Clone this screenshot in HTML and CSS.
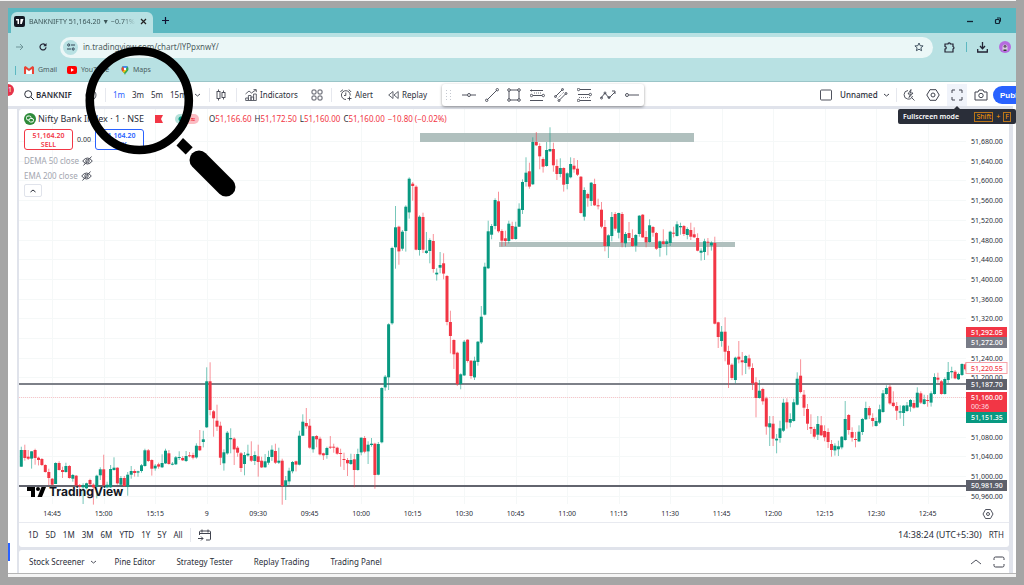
FILE: index.html
```html
<!DOCTYPE html>
<html lang="en">
<head>
<meta charset="utf-8">
<title>BANKNIFTY chart</title>
<link rel="stylesheet" href="styles.css">
</head>
<body>
<div class="topline"></div>
<div class="window">
  <header class="tabstrip">
    <div class="tab">
      <svg class="favicon" viewBox="0 0 11 11"><rect width="11" height="11" rx="2" fill="#131722"/><path d="M2 3h3v5H3.500V4.500H2zM6.500 3h3L7.800 8H6.200z" fill="#fff"/></svg>
      <span class="tab-title">BANKNIFTY 51,164.20 ▼ −0.71%</span>
      <button class="plain" aria-label="Close tab"><svg width="7" height="7" viewBox="0 0 7 7"><path d="M1 1l5 5M6 1L1 6" stroke="#222" stroke-width="1.200"/></svg></button>
    </div>
    <button class="plain newtab" aria-label="New tab"><svg width="7" height="7" viewBox="0 0 7 7"><path d="M3.500 0v7M0 3.500h7" stroke="#113" stroke-width="1.200"/></svg></button>
    <div class="winbuttons">
      <button class="plain" aria-label="Minimize"><svg width="8" height="8" viewBox="0 0 8 8"><path d="M1 4.500h6" stroke="#123" stroke-width="1.300"/></svg></button>
      <button class="plain" aria-label="Restore"><svg width="8" height="8" viewBox="0 0 8 8"><rect x="1.500" y="2.500" width="4" height="4" rx="1" fill="none" stroke="#123" stroke-width="1.200"/><path d="M3 1h3.500v3.700" fill="none" stroke="#123"/></svg></button>
    </div>
  </header>

  <div class="addressbar">
    <button class="plain" aria-label="Forward"><svg width="8" height="8" viewBox="0 0 8 8"><path d="M0 4h7M4 1l3 3-3 3" fill="none" stroke="#6f9599"/></svg></button>
    <button class="plain" aria-label="Reload"><svg width="8" height="8" viewBox="0 0 8 8"><path d="M7 4.200A3 3 0 1 1 6 1.700" fill="none" stroke="#223" stroke-width="1.200"/><path d="M7.500 0v3.200H4.300z" fill="#223"/></svg></button>
    <div class="omnibox">
      <span class="site"><svg width="8" height="8" viewBox="0 0 8 8"><g fill="none" stroke="#345"><circle cx="1.700" cy="2" r="1.100"/><path d="M4 2h4M0 6h4"/><circle cx="6.200" cy="6" r="1.100"/></g></svg></span>
      <input class="url" aria-label="Address" value="in.tradingview.com/chart/lYPpxnwY/">
      <svg width="10" height="10" viewBox="0 0 10 10"><path d="M5 1l1.200 2.700 2.900.2-2.200 1.900.7 2.900L5 7.200 2.400 8.700l.7-2.900L.9 3.900l2.900-.2z" fill="none" stroke="#345" stroke-width=".9"/></svg>
    </div>
    <div class="extensions">
      <svg width="11" height="11" viewBox="0 0 11 11"><path d="M1 2h3a1.200 1.200 0 0 1 2.400 0H9v2.500a1.300 1.300 0 0 1 0 2.500v3H1V7a1.200 1.200 0 0 0 0-2.500z" fill="none" stroke="#223" stroke-width="1.200"/></svg>
      <i></i>
      <svg width="11" height="11" viewBox="0 0 11 11"><path d="M5.500 0v6M3 4l2.500 2.700L8 4M.7 7v3h9.600V7" fill="none" stroke="#223" stroke-width="1.300"/></svg>
      <svg width="12" height="12" viewBox="0 0 12 12"><circle cx="6" cy="6" r="6" fill="#b66be0"/><path d="M3.500 9.500V6a2.500 2.500 0 0 1 5 0v3.500z" fill="#d9cfe0"/><circle cx="6" cy="5.200" r="1.500" fill="#6a5a70"/><path d="M4.500 10V8.500h3V10z" fill="#333"/></svg>
    </div>
  </div>

  <nav class="bookmarks">
    <a class="gmail" href="#"><svg width="10" height="8" viewBox="0 0 10 8"><path d="M0 1v7h2V3l3 2 3-2v5h2V1L8.500 0 5 2.700 1.500 0z" fill="#ea4335"/><path d="M2.200 3.500V8h5.600V3.500L5 5.600z" fill="#fff"/></svg>Gmail</a>
    <a class="youtube" href="#"><svg width="10" height="8" viewBox="0 0 10 8"><rect width="10" height="8" rx="2" fill="#f00"/><path d="M4 2.300v3.400L7 4z" fill="#fff"/></svg>YouTube</a>
    <a href="#"><svg width="8" height="9" viewBox="0 0 8 9"><path d="M4 9C3.500 6.500.5 5.500.5 3a3.500 3.500 0 0 1 7 0C7.500 5.500 4.500 6.500 4 9z" fill="#34a853"/><path d="M1.500.8A3.500 3.500 0 0 1 6.600.9L4 3z" fill="#4285f4"/><path d="M1.500.8L4 3 1.700 5.800C.9 5 .5 4 .5 3c0-.9.4-1.700 1-2.200z" fill="#ea4335"/><path d="M1.700 5.700L4 3l1.500 1-2.600 3z" fill="#fbbc04"/><circle cx="4" cy="3" r="1.200" fill="#fff"/></svg>Maps</a>
  </nav>

  <div class="toolbar">
    <span class="badge">1</span>
    <svg width="10" height="10" viewBox="0 0 10 10"><circle cx="4.200" cy="4.200" r="3.500" fill="none" stroke="#2a2e39"/><path d="M7 7l3 3" stroke="#2a2e39"/></svg>
    <button class="plain symbol">BANKNIF</button>
    <svg width="12" height="12" viewBox="0 0 12 12"><circle cx="6" cy="6" r="5" fill="none" stroke="#2a2e39" stroke-width=".8"/><path d="M6 3.500v5M3.500 6h5" stroke="#2a2e39" stroke-width=".8"/></svg>
    <i class="sep"></i>
    <button class="plain on">1m</button>
    <button class="plain">3m</button>
    <button class="plain">5m</button>
    <button class="plain">15m</button>
    <svg width="8" height="8" viewBox="0 0 8 8"><path d="M2 3l2.500 2L7 3" fill="none" stroke="#50535e"/></svg>
    <i class="sep"></i>
    <svg width="10" height="12" viewBox="0 0 10 12"><g fill="none" stroke="#40434e" stroke-width=".9"><rect x="1" y="2.500" width="3" height="7"/><path d="M2.500 .5v2M2.500 9.500v2"/><rect x="6" y="3.500" width="3" height="5"/><path d="M7.500 1.500v2M7.500 8.500v2"/></g></svg>
    <i class="sep"></i>
    <button class="plain"><svg width="12" height="12" viewBox="0 0 12 12"><g fill="none" stroke="#50535e" stroke-width=".9"><path d="M.5 5L4 2l2.500 2L11 .8M8.500.6h2.800v2.500"/><path d="M.7 11.500V9h2.700v2.500zM3.400 11.500V6.500h2.600v5zM6 11.500V8h2.600v3.500zM8.600 11.500V5h2.700v6.500z"/></g></svg>Indicators</button>
    <svg width="12" height="12" viewBox="0 0 12 12"><g fill="none" stroke="#50535e"><rect x="1" y="1" width="4" height="4" rx="1"/><rect x="7" y="1" width="4" height="4" rx="1"/><rect x="1" y="7" width="4" height="4" rx="1"/><rect x="7" y="7" width="4" height="4" rx="1"/></g></svg>
    <i class="sep"></i>
    <button class="plain"><svg width="12" height="12" viewBox="0 0 12 12"><g fill="none" stroke="#40434e" stroke-width=".9"><path d="M6 10.500A4.400 4.400 0 1 1 10.200 6.500M5.800 3.500V6.500H4M.5 3A4 4 0 0 1 3 .8M8.600.8A4 4 0 0 1 11 3M9.500 7.500v4M7.500 9.500h4"/></g></svg>Alert</button>
    <button class="plain"><svg width="11" height="10" viewBox="0 0 11 10"><path d="M5 1.500v7L.7 5zM10.200 1.500v7L6 5z" fill="none" stroke="#50535e" stroke-width=".9"/></svg>Replay</button>
    <div class="drawbar">
      <svg width="8" height="14" viewBox="0 0 8 14"><path d="M1.500 2v11M5.500 2v11" stroke="#c5c8d0" stroke-dasharray="1 2"/></svg>
      <svg width="14" height="14" viewBox="0 0 14 14"><path d="M0 7h5M9 7h5"/><circle cx="7" cy="7" r="1.500"/></svg>
      <svg width="14" height="14" viewBox="0 0 14 14"><path d="M2 12L12 2"/><circle cx="1.700" cy="12.300" r="1.200"/><circle cx="12.300" cy="1.700" r="1.200"/></svg>
      <svg width="14" height="14" viewBox="0 0 14 14"><path d="M2 3v8M12 3v8M3 2h8M3 12h8"/><circle cx="2" cy="2" r="1.300"/><circle cx="12" cy="2" r="1.300"/><circle cx="2" cy="12" r="1.300"/><circle cx="12" cy="12" r="1.300"/></svg>
      <svg width="15" height="14" viewBox="0 0 15 14"><path d="M0 2.500h13M3 7.500h9M0 12.500h13"/><path d="M4 5h8" stroke-dasharray="1 1" stroke-width=".8"/><circle cx="1.500" cy="7.500" r="1.200"/><circle cx="13.300" cy="7.500" r="1.200"/><circle cx="1.500" cy="2.500" r=".6"/></svg>
      <svg width="14" height="14" viewBox="0 0 14 14"><path d="M1.500 8.500l7-7M5 12.500l7-7"/><path d="M3.500 10.500l7-7" stroke-dasharray="1 1" stroke-width=".8"/><circle cx="1.500" cy="8.500" r="1"/><circle cx="8.500" cy="1.500" r="1"/><circle cx="5" cy="12.500" r="1"/><circle cx="12" cy="5.500" r="1"/></svg>
      <svg width="15" height="14" viewBox="0 0 15 14"><path d="M3 1.500h11M1 6.500h11M3 12.500h11"/><path d="M2 9.500h11" stroke-dasharray="1 1" stroke-width=".8"/><circle cx="1.500" cy="1.500" r="1.200"/><circle cx="13.300" cy="6.500" r="1.200"/><circle cx="1.500" cy="12.500" r="1.200"/></svg>
      <svg width="16" height="14" viewBox="0 0 16 14"><path d="M1 10l4-5 4 5 6-6M12 3h3v3"/><circle cx="1.500" cy="10" r="1"/><circle cx="5" cy="5" r="1"/><circle cx="9" cy="9.500" r="1"/></svg>
      <svg width="14" height="14" viewBox="0 0 14 14"><circle cx="2" cy="7" r="1.500"/><path d="M4 7h10"/></svg>
    </div>
    <span></span>
    <div class="layouts">
      <svg width="12" height="12" viewBox="0 0 12 12"><rect x=".5" y="1" width="11" height="10" rx="1" fill="none" stroke="#50535e"/></svg>
      <button class="plain name">Unnamed<svg width="8" height="8" viewBox="0 0 8 8"><path d="M2 3l2.500 2L7 3" fill="none" stroke="#40434e"/></svg></button>
      <i class="sep"></i>
      <button class="plain tool" aria-label="Quick search"><svg width="12" height="12" viewBox="0 0 12 12"><g fill="none" stroke="#40434e" stroke-width=".9"><path d="M5 1.500A4.300 4.300 0 1 0 9.500 7M8.500 8.500l3 3"/><path d="M8 .5L5 5h2.500L6 8.500 10 4H7.500z"/></g></svg></button>
      <button class="plain tool" aria-label="Settings"><svg width="14" height="12" viewBox="0 0 14 12"><g fill="none" stroke="#40434e"><path d="M4 .7h6L13.200 6 10 11.300H4L.8 6z"/><circle cx="7" cy="6" r="2"/></g></svg></button>
      <button class="plain tool active" aria-label="Fullscreen"><svg width="12" height="12" viewBox="0 0 12 12"><path d="M1 4V1h3M8 1h3v3M11 8v3H8M4 11H1V8" fill="none" stroke="#40434e"/></svg></button>
      <button class="plain tool" aria-label="Snapshot"><svg width="14" height="12" viewBox="0 0 14 12"><g fill="none" stroke="#40434e"><path d="M1 3h3l1-2h4l1 2h3v8H1z"/><circle cx="7" cy="6.500" r="2.200"/></g></svg></button>
      <button class="publish">Publish</button>
    </div>
  </div>

  <div class="workspace">
    <aside class="rail"><span></span></aside>
    <main class="main">
      <section class="pane">
        <svg class="chart" id="chart" viewBox="19 109 990 413"></svg>
        <div class="legend">
          <div class="title">
            <svg width="12" height="12" viewBox="0 0 12 12"><circle cx="6" cy="6" r="6" fill="#2e8b3a"/><rect x="2.500" y="3" width="4.500" height="4" rx="1.500" fill="none" stroke="#fff"/><rect x="5" y="5.500" width="4.500" height="3.500" rx="1.500" fill="#2e8b3a" stroke="#fff"/></svg>
            <h1>Nifty Bank Index · 1 · NSE</h1>
            <svg class="flag" width="8" height="8" viewBox="0 0 8 8"><path d="M0 0h8L6 4l2 4H0z" fill="#f23645"/></svg>
            <span class="pills"><b></b><b class="pink">≈</b></span>
            <span class="ohlc">O<em>51,166.60</em></span><span class="ohlc">H<em>51,172.50</em></span><span class="ohlc">L<em>51,160.00</em></span><span class="ohlc">C<em>51,160.00</em></span><span class="ohlc"><em>−10.80 (−0.02%)</em></span>
          </div>
          <div class="orders">
            <button class="order sell">51,164.20<br>SELL</button>
            <span>0.00</span>
            <button class="order buy">51,164.20<br>BUY</button>
          </div>
          <div class="study">DEMA 50 close <svg width="11" height="10" viewBox="0 0 11 10"><g fill="none" stroke="#50535e"><path d="M.7 5Q5.500-1 10.300 5 5.500 11 .7 5z"/><circle cx="5.500" cy="5" r="1.700"/><path d="M1.500 9.500l8-9"/></g></svg></div>
          <div class="study">EMA 200 close <svg width="11" height="10" viewBox="0 0 11 10"><g fill="none" stroke="#50535e"><path d="M.7 5Q5.500-1 10.300 5 5.500 11 .7 5z"/><circle cx="5.500" cy="5" r="1.700"/><path d="M1.500 9.500l8-9"/></g></svg></div>
          <button class="collapse" aria-label="Collapse legend"><svg width="8" height="6" viewBox="0 0 8 6"><path d="M1.500 4L4 2l2.500 2" fill="none" stroke="#2a2e39"/></svg></button>
        </div>
        <div class="brand"><svg width="19" height="10" viewBox="0 0 19 10"><path d="M0 0h8v10H4V4H0z"/><circle cx="11" cy="2" r="2"/><path d="M14.500 0H19l-4 10h-4.500z"/></svg>TradingView</div>
      </section>
      <div class="ranges">
        <button class="plain">1D</button><button class="plain">5D</button><button class="plain">1M</button><button class="plain">3M</button><button class="plain">6M</button><button class="plain">YTD</button><button class="plain">1Y</button><button class="plain">5Y</button><button class="plain">All</button>
        <i class="sep"></i>
        <svg width="14" height="13" viewBox="0 0 14 13"><path d="M1.500 6V3q0-1 1-1h9q1 0 1 1v7q0 1-1 1H8M1.500 4.500h11M4 .5v3M10 .5v3M0 9.500h5M3 7.500l2 2-2 2" fill="none" stroke="#40434e"/></svg>
        <span class="clock">14:38:24 (UTC+5:30)</span><span class="rth">RTH</span>
      </div>
      <div class="panels">
        <button class="plain">Stock Screener <svg width="8" height="8" viewBox="0 0 8 8"><path d="M2 3l2.500 2L7 3" fill="none" stroke="#50535e"/></svg></button>
        <button class="plain">Pine Editor</button>
        <button class="plain">Strategy Tester</button>
        <button class="plain">Replay Trading</button>
        <button class="plain">Trading Panel</button>
        <span class="resize"><svg width="12" height="12" viewBox="0 0 12 12"><path d="M1 8l5-4 5 4" fill="none" stroke="#50535e"/></svg><svg width="12" height="12" viewBox="0 0 12 12"><path d="M1 4V2.500Q1 1 2.500 1h7Q11 1 11 2.500V4M11 8v1.500Q11 11 9.500 11h-7Q1 11 1 9.500V8" fill="none" stroke="#40434e"/></svg></span>
      </div>
    </main>
  </div>
  <footer class="windowfoot"></footer>
  <div class="tooltip"><span>Fullscreen mode</span><kbd>Shift</kbd>+<kbd>F</kbd></div>
</div>
<svg class="magnifier" width="152" height="152" viewBox="85 46 152 152"><circle cx="139.300" cy="100.500" r="49.500" fill="none" stroke="#000" stroke-width="8.600"/><path d="M176.500 145.500L183 138l9.700 9.300-7 7.200z"/><path d="M199 160l27 27" stroke="#000" stroke-width="19" stroke-linecap="round"/></svg>
<script src="chart.js"></script>
</body>
</html>
```
FILE: styles.css
```css
* { box-sizing: border-box; }
body { margin: 0; min-height: 100vh; padding: 0 8px 8px; background: #a5a5a5; font: 8px/12px "Noto Sans", "Open Sans", sans-serif; color: #2a2e39; display: flex; flex-direction: column; }
svg { flex: none; display: block; }
.topline { height: 1px; margin: 0 0 7px -8px; background: #f4f4f4; }
.window { position: relative; flex: 1; display: flex; flex-direction: column; background: #fff; overflow: hidden; }
.plain { border: 0; padding: 0; margin: 0; background: none; font: inherit; color: inherit; display: flex; align-items: center; white-space: nowrap; text-align: left; }
.sep { width: 1px; height: 14px; background: #e6e8ee; }

.tabstrip { height: 25px; padding-left: 3px; display: flex; align-items: center; background: #5cb8c1; }
.tab { align-self: flex-end; width: 142px; height: 21px; padding: 0 6px 2px 3px; display: flex; align-items: center; gap: 4px; background: #b8e1e3; border-radius: 6px 6px 0 0; }
.favicon { width: 11px; height: 11px; }
.tab-title { flex: 1; overflow: hidden; white-space: nowrap; font-size: 7px; color: #3c5558; mask-image: linear-gradient(to right, #000 88%, transparent); }
.newtab { margin-left: 9px; }
.winbuttons { margin-left: auto; padding-right: 14px; display: flex; gap: 20px; }
.addressbar { height: 28px; padding: 0 5px 0 8px; display: flex; align-items: center; gap: 15px; background: #b8e1e3; }
.omnibox { flex: 1; height: 21px; margin-left: -2px; padding: 0 9px 0 3px; display: flex; align-items: center; gap: 5px; border-radius: 11px; background: #ebf7f7; }
.site { width: 15px; height: 15px; display: grid; place-items: center; border-radius: 50%; background: #b8e1e3; }
.url { flex: 1; border: 0; padding: 0; background: none; font: inherit; color: #4b5d60; }
.extensions { width: 67px; margin-left: -4px; display: flex; align-items: center; justify-content: space-between; }
.extensions i { width: 1px; height: 10px; background: #5cb8c1; }
.bookmarks { height: 21px; padding: 0 0 2px 7px; display: flex; align-items: center; background: #b8e1e3; border-bottom: 1px solid #9bc5c8; font-size: 7px; }
.bookmarks::before { content: ""; width: 1px; height: 9px; margin-right: 8px; background: #5cb8c1; }
.bookmarks a { display: flex; align-items: center; gap: 4px; color: #4b5d60; text-decoration: none; }
.bookmarks .gmail { width: 43px; }
.bookmarks .youtube { width: 54px; }

.toolbar { height: 24px; padding-top: 2px; display: grid; align-items: center; grid-template-columns: 16px 12px 49px 20px 8px 19px 19px 19px 23px 16px 7px 20px 9px 66px 20px 9px 48px 54px 202px 1fr 196px; }
.toolbar .plain { gap: 3px; }
.badge { width: 6px; height: 12px; align-self: start; border-radius: 0 6px 6px 0; background: #e5344a; color: #fff; font-size: 7px; line-height: 12px; }
.symbol, .publish { font-weight: 600; }
.toolbar .on { color: #2962ff; }
.drawbar { height: 22px; display: flex; align-items: center; justify-content: space-between; padding: 0 5px 0 3px; border-radius: 3px; background: #fff; box-shadow: 0 1px 3px #0006; z-index: 1; }
.drawbar svg { fill: none; stroke: #50535e; }
.layouts { display: flex; align-items: center; overflow: hidden; }
.layouts > * { flex: none; }
.layouts .name { width: 56px; padding-right: 6px; margin: 0 0 0 8px; justify-content: space-between; font-weight: 500; }
.layouts .sep { margin: 0 1px 0 0; }
.layouts .tool { width: 20px; height: 22px; margin: 0 2px 0 1px; justify-content: center; }
.layouts .tool + .tool { margin-left: 2px; }
.layouts .active { background: #f0f3fa; }
.publish { height: 18px; padding: 0 7px; border: 0; border-radius: 9px; background: #2962ff; color: #fff; font-size: 8px; }

.workspace { flex: 1; display: flex; background: #e0e3eb; padding-right: 4px; border-right: 3px solid #fff; }
.rail { width: 9px; margin-top: 3px; background: #fff; display: flex; align-items: flex-end; }
.rail span { width: 2px; height: 18px; margin-bottom: 12px; background: #2962ff; }
.main { flex: 1; min-width: 0; padding: 3px 0 0 2px; display: flex; flex-direction: column; }
.pane { position: relative; background: #fff; border-radius: 3px 3px 0 0; overflow: hidden; }
.chart { width: 100%; height: auto; font-size: 7px; fill: #2a2e39; }
.legend { position: absolute; left: 5px; top: 4px; }
.title, .orders, .study { display: flex; align-items: center; }
.title h1 { margin: 0 7px 0 2px; width: 110px; font: 9px/12px "Noto Sans", sans-serif; white-space: nowrap; }
.flag { margin-right: 12px; }
.pills { display: flex; width: 34px; }
.pills b { width: 12px; height: 10px; border-radius: 5px 0 0 5px; background: radial-gradient(circle, #089981 2px, #b5e1da 3px); line-height: 9px; text-align: center; }
.pills .pink { border-radius: 0 5px 5px 0; background: #fbbcc2; color: #f23645; }
.ohlc { margin-right: 3px; white-space: nowrap; }
.ohlc em { font-style: normal; color: #f23645; }
.orders { margin-top: 4px; }
.orders span { width: 22px; text-align: center; font-size: 7px; }
.order { width: 49px; height: 21px; padding: 0; background: #fff; border: 1px solid; border-radius: 3px; font: 600 7px/9px "Noto Sans", sans-serif; }
.sell { color: #f23645; }
.buy { color: #2962ff; }
.study { height: 15px; gap: 3px; color: #a3a6af; }
.orders + .study { margin-top: 3px; }
.collapse { width: 18px; height: 13px; margin-top: 1px; padding: 0; display: grid; place-items: center; border: 1px solid #e0e3eb; border-radius: 2px; background: #fff; }
.brand { position: absolute; left: 8px; bottom: 22px; display: flex; align-items: center; gap: 3px; font: 700 12px/16px Inter, sans-serif; color: #131722; }
.ranges { height: 25px; padding: 0 5px 0 9px; display: flex; align-items: center; gap: 7px; background: #fff; border-top: 1px solid #e8eaf0; border-radius: 0 0 3px 3px; }
.clock { margin-left: auto; font-size: 9px; }
.panels { flex: 1; margin-top: 3px; padding: 0 4px 0 10px; display: flex; align-items: center; gap: 21px; background: #fff; border-radius: 3px 3px 0 0; }
.panels .plain { gap: 5px; }
.panels .plain:first-child { margin-right: -4px; }
.resize { margin-left: auto; display: flex; gap: 11px; }
.windowfoot { height: 4px; border-top: 1px solid #b4b4b4; background: #f5f5f5; }
.tooltip { position: absolute; right: 0; top: 101px; width: 118px; height: 15px; padding: 0 5px; display: flex; align-items: center; gap: 3px; border-radius: 2px; background: #2a2e39; color: #ff9800; font-size: 7px; line-height: 10px; }
.tooltip::before { content: ""; position: absolute; left: 56px; top: -3px; border: 3px solid transparent; border-top: 0; border-bottom-color: #2a2e39; }
.tooltip span { flex: 1; color: #fff; font-weight: 600; white-space: nowrap; }
.tooltip kbd { padding: 0 1px; border: 1px solid #b9751a; font: inherit; line-height: 8px; }
.magnifier { position: absolute; left: 85px; top: 46px; pointer-events: none; }
```
FILE: chart.js
```js
// Candles: colour, high, body top, body bottom, low, in thirds of a pixel below the section's base.
const sections = [
  [-54, 350, `g290 300 350 350,r284 300 324 332,r300 320 326 330,g304 304 326 356,r296 300 324 344,r320 323 330 346,r324 327 345 348,r343 345 366 368,r356 366 384 406,r384 386 404 406,g337 339 402 402,r334 339 360 362,r350 360 366 384,g338 348 366 368,r345 348 384 386,g372 375 386 395,r375 377 406 408,r402 405 410 440,g400 406 412 462,g398 400 415 418,r386 390 403 405,r400 404 412 464,g374 377 410 445,g352 358 376 390,r314 358 406 408,g395 404 412 415,g345 357 412 414,g322 353 360 362,r352 353 400 404,g378 384 404 410,r378 384 408 410,g366 374 410 437,g348 363 374 386,r358 363 369 380,g362 364 368 380,g342 346 363 368,g296 301 348 350,r297 301 333 336,r328 330 356 377,g342 347 355 362,r338 343 350 356,g313 339 352 354,g296 302 340 342,r300 310 342 344,g336 341 344 346,g318 322 343 345,g304 321 323 330,r318 324 331 333,g303 318 333 336,r306 316 318 322,r308 315 323 328,g280 287 322 326,r240 288 301 303,g242 268 276 292,g52 94 232 234,r37 94 180 196,r180 184 205 260,r164 212 230 243,r215 227 323 345,g298 307 340 362,g243 248 310 314,g235 264 268 310,r262 266 298 345,r288 293 308 320,r306 310 354 366,g306 315 342 376,g284 311 316 320,r274 318 332 336,g304 315 333 345,r284 319 336 380,r320 332 352 354,g312 334 352 353,g302 321 338 344,g286 299 321 333,r281 303 338 342,g293 332 338 342,r326 332 408 464,g378 391 408 450,g353 362 394 404,g333 336 364 370,r332 334 344 364,g242 257 344 346,g193 215 257 258,r174 219 229 236,r207 227 293 296,g258 259 298 308,r255 258 268 292,r260 266 313 316,r308 310 316 330,g290 294 315 326,r258 290 293 297,r281 290 292 308,r290 293 311 314,r296 309 311 350,r308 327 329 360,r324 330 340 378,g311 330 342 345,r312 328 360 412,g296 312 360 362,g262 263 307 316,r258 264 305 310,g274 284 304 342,g264 281 285 290,r278 281 375 416,g276 282 374 376,g112 114 277 280`],
  [52, 160, `g645 650 682 692,g490 493 652 690,g260 264 490 494,g138 202 262 326,r197 200 274 314,g210 215 266 272,g136 140 213 275,g52 56 157 176,r66 71 78 122,r76 80 269 271,g166 170 270 287,r158 171 269 279,g216 272 279 282,g235 240 273 310,r222 243 327 338,g325 338 343 362,g276 315 323 340,r280 310 341 358,r345 348 486 496,r452 486 528 580,r538 540 583 627,r575 578 672 678,g640 643 672 688,g540 545 646 648,r538 539 603 608,r600 602 648 656,g590 602 652 660,g543 545 606 617,g438 470 547 552,g308 320 464 466,g182 214 325 327,g192 198 224 238,g115 120 198 208,r95 124 214 218,r208 213 242 260,r212 235 243 258,g182 191 243 250,r185 198 237 239,g185 200 237 239,g130 146 200 201,g58 66 150 162,g-8 38 66 80,r8 34 80 86`],
  [95, 120, `g52 66 193 195,r36 66 76 78,r70 78 109 148,r112 117 140 158,g66 90 138 140,g22 87 94 96,r68 87 136 155,r118 138 162 180,g115 144 162 172,r142 144 194 215,g157 160 192 208,g112 132 172 175,r114 137 148 158,r120 146 164 168,r168 170 279 281,g202 210 290 302,r218 222 235 260,g186 188 243 258,r176 192 256 258,r236 256 258 268,r246 269 320 325,r300 321 378 394,g343 346 378 414,g276 291 348 364,r276 282 326 332,g278 279 338 355,r276 282 368 382,g336 342 370 382,r306 339 354 362,r328 354 378 380,g342 345 377 395,g285 287 342 350,r282 284 352 353,r333 351 367 382,g298 316 366 368,r318 321 338 350,r336 339 386 390`],
  [132, 200, `g122 124 144 170,r88 124 132 134,g118 124 132 166,g92 95 129 138,r80 98 101 112,g64 73 108 110,g68 78 82 104,r75 78 102 108,g82 87 105 118,r68 90 110 120,r82 103 112 114,r100 114 152 154,g145 152 158 182,g116 124 156 180,r114 125 128 166,g124 128 136 152,r110 129 371 373,r365 367 411 444,g378 395 423 440,r352 395 455 484,r437 453 494 564,r490 494 534 540,g470 473 540 550,r423 470 478 490,r456 481 487 526,g465 468 489 522,r464 475 500 508,r490 504 550 570,r532 547 594 652,g540 572 594 596,r563 567 604 614,r590 595 680 704,g648 670 682 738,r648 671 716 738,g702 716 721 760,g662 685 714 728,g596 608 692 696,r595 607 667 686,g640 657 668 682,g596 607 663 665,g517 536 614 616,r478 527 576 580,r570 584 623 648,r612 627 671 690,r643 681 686 702,r680 687 710 716`],
  [178, 340, `g228 252 284 300,r228 256 286 288,r256 273 292 304,r265 276 306 324,r300 312 330 350,g310 317 331 347,g302 319 328 348,g288 290 322 328,g183 237 300 302,r222 225 270 284,r262 276 293 305,r276 297 300 322,g256 275 304 306,g234 237 276 285,g185 204 238 240,r198 204 226 237,r220 234 243 260,g232 243 258 260,g194 208 248 252,g150 160 216 218,g136 144 162 164,r134 140 190 194,r154 188 198 202,r186 198 212 240,g196 214 218 236,g195 197 219 258,g186 196 213 216,g177 180 200 215,r180 189 203 206,g142 158 202 203,r154 160 188 192,g164 178 192 194,r165 180 183 200,g154 160 188 200,g100 111 162 164,r98 113 119 128,r120 124 162 164,g112 117 162 164,g66 96 120 130,g80 93 97 115,r90 95 115 118,g98 102 118 120,g70 72 105 108,r68 73 88 92`]
];

const parts = [];
const rect = (x, y, w, h, fill, extra = '') => parts.push(`<rect x="${x}" y="${y}" width="${w}" height="${h}" fill="${fill}" ${extra}/>`);
const text = (x, y, s, extra = '') => parts.push(`<text x="${x}" y="${y}" ${extra}>${s}</text>`);
const priceY = p => 141 + (51680 - p) / 40 * 19.7;

// grid and axis labels
const hidden = [51280, 51160, 51120];
for (let p = 51680; p >= 50960; p -= 40) {
  const y = priceY(p);
  rect(19, Math.round(y), 947, 1, '#f5f8f8');
  if (!hidden.includes(p)) text(971, y + 3, p.toLocaleString('en-US') + '.00');
}
['14:45', '15:00', '15:15', '9', '09:30', '09:45', '10:00', '10:15', '10:30', '10:45', '11:00', '11:15', '11:30', '11:45', '12:00', '12:15', '12:30', '12:45'].forEach((t, i) => {
  const x = 52.2 + i * 51.5;
  rect(Math.round(x), 109, 1, 395, '#f5f8f8');
  text(x, 516, t, 'text-anchor="middle"');
});

// zones and levels
rect(420, 133, 274, 9, '#b0c0be');
rect(499, 242, 236, 5, '#b0c0be');
rect(19, 383, 947, 2, '#7d8088');
rect(19, 485, 947, 2, '#62646e');
parts.push('<path d="M19 397.500H966" stroke="#f9c5c9" stroke-dasharray="1 1"/>');

for (const [start, base, data] of sections) {
  data.split(',').forEach((row, i) => {
    const [h, t, b, l] = row.slice(1).split(' ').map(v => base + v / 3);
    const x = 206.7 + 3.433 * (start + i);
    const c = row[0] === 'g' ? '#089981' : '#f23645';
    rect((x - .5).toFixed(1), h.toFixed(1), 1, (l - h).toFixed(1), c, 'opacity=".55"');
    rect((x - 1.5).toFixed(1), t.toFixed(1), 3, Math.max(1, b - t).toFixed(1), c);
  });
}

// price tags
const tag = (y, h, fill, s, color = '#fff', extra = '') => {
  rect(966, y, 41, h, fill, extra);
  text(971, y + 8, s, `fill="${color}" font-weight="500"`);
};
tag(327, 10, '#f23645', '51,292.05');
tag(337, 11, '#787b86', '51,272.00');
tag(362.5, 11, '#fff', '51,220.55', '#f23645', 'stroke="#f7a1a8"');
tag(379, 11, '#5d606b', '51,187.70');
tag(392, 20, '#f23645', '51,160.00');
text(971, 409, '00:36', 'fill="#ffdfe1"');
tag(412, 11, '#089981', '51,151.35');
tag(480, 11, '#5d606b', '50,981.90');
parts.push('<g fill="none" stroke="#50535e"><path d="M985.500 509.500h5l2.500 4.500-2.500 4.500h-5L983 514z"/><circle cx="988" cy="514" r="1.500"/></g>');
document.getElementById('chart').innerHTML = parts.join('');
```
